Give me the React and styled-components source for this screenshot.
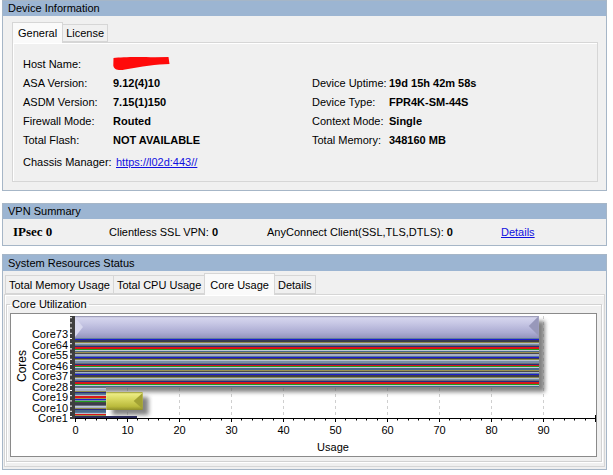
import React from "react";
import styled, { createGlobalStyle } from "styled-components";

const GlobalStyle = createGlobalStyle`
  html, body { margin: 0; padding: 0; background: #ffffff; }
  body { font-family: "Liberation Sans", Arial, sans-serif; font-size: 11px; color: #000; }
  * { box-sizing: border-box; }
`;

const Page = styled.div`
  width: 613px;
  height: 475px;
  padding: 0 6px 0 2px;
  display: flex;
  flex-direction: column;
  overflow: hidden;
`;

const Panel = styled.section`
  border: 1px solid #a6b6c7;
  background: #f0f0f0;
  margin-top: ${(p) => p.$gap || 0}px;
`;

const PanelHeader = styled.div`
  height: ${(p) => p.$h || 15}px;
  line-height: ${(p) => p.$h || 15}px;
  background: #9cb5d2;
  padding-left: 5px;
  font-size: 11px;
  white-space: nowrap;
`;

const PanelBody = styled.div`
  padding: ${(p) => p.$pad};
`;

const TabStrip = styled.div`
  display: flex;
  align-items: flex-end;
  height: ${(p) => p.$h}px;
  padding-left: ${(p) => p.$indent || 0}px;
`;

const Tab = styled.div`
  position: relative;
  z-index: ${(p) => (p.$selected ? 2 : 1)};
  height: ${(p) => (p.$selected ? p.$h + 1 : p.$h - 2)}px;
  margin-bottom: ${(p) => (p.$selected ? -1 : 0)}px;
  margin-left: ${(p) => (p.$first ? 0 : -1)}px;
  padding: 0 ${(p) => (p.$selected ? 5 : 3)}px;
  display: flex;
  align-items: center;
  border: 1px solid #d6d6d6;
  border-bottom: ${(p) => (p.$selected ? "none" : "1px solid #d6d6d6")};
  background: ${(p) => (p.$selected ? "#fafafa" : "#f0f0f0")};
  white-space: nowrap;
`;

const TabContent = styled.div`
  border: 1px solid #d6d6d6;
  background: #f0f0f0;
  box-shadow: inset 1px 1px 0 #ffffff;
  padding: ${(p) => p.$pad || 0};
`;

const InfoGrid = styled.div`
  display: grid;
  grid-template-columns: 90px 199px 77px 1fr;
  grid-auto-rows: 19px;
  align-items: center;
  padding: 0 10px;
`;

const Label = styled.span`
  white-space: nowrap;
`;

const Value = styled.span`
  font-weight: bold;
  white-space: nowrap;
`;

const RedactionCell = styled.div`
  display: flex;
  align-items: center;
  height: 19px;
`;

const ChassisRow = styled.div`
  display: grid;
  grid-template-columns: 93px 1fr;
  align-items: center;
  height: 19px;
  margin-top: 3px;
  padding: 0 10px;
`;

const Link = styled.a`
  color: #1010e0;
  text-decoration: underline;
  cursor: pointer;
  white-space: nowrap;
`;

const VpnRow = styled.div`
  display: flex;
  align-items: center;
  height: 26px;
  padding-left: 10px;
`;

const VpnCell = styled.div`
  width: ${(p) => p.$w}px;
  flex: none;
  white-space: nowrap;
`;

const IpsecText = styled.span`
  font-family: "Liberation Serif", "Times New Roman", serif;
  font-weight: bold;
  font-size: 13px;
`;

const Group = styled.fieldset`
  margin: 3px 2px 4px 1px;
  padding: 2px 4px 4px 3px;
  border: 1px solid #d2d2d2;
  box-shadow: 1px 1px 0 #ffffff, inset 1px 1px 0 #ffffff;
  min-width: 0;
`;

const Legend = styled.legend`
  padding: 0 2px;
  line-height: 13px;
  font-size: 11px;
`;

const ChartFrame = styled.div`
  height: 144px;
  border: 1px solid #8a8a8a;
  background: #ffffff;
  overflow: hidden;
`;

const Redaction = () => (
  <svg width="57" height="15" viewBox="0 0 57 15" style={{ display: "block", flex: "none" }}>
    <path
      d="M0.5 2 C10 0.6 28 0.8 42 1.2 L55.5 1 L56.5 8 C44 8.2 28 10.5 12 13.6 C5 15 0.8 13.4 0.3 9.5 Z"
      fill="#ff0a0a"
    />
  </svg>
);

const PAL = [
  "#1f9f1f", "#d81818", "#2a2a7a", "#687078", "#7890a8", "#b4bece",
  "#8c8a4a", "#3c3c4c", "#1c1cd0", "#5a7a9a", "#a8b0c8", "#484848",
  "#9a9050", "#4a6a8a", "#c0c8d8",
];

const X0 = 64;
const UNIT = 5.2;
const AY = 104;
const STEP = 7 / 6;
const cy = (n) => AY - (n - 1) * STEP;
const vx = (v) => X0 + v * UNIT;
const FONT = "Liberation Sans, Arial, sans-serif";

function CoreChart() {
  const high = [];
  for (let n = 28; n <= 69; n++) {
    high.push(
      <rect key={"h" + n} x={X0} y={cy(n) - STEP / 2} width={vx(89.2) - X0} height={STEP + 0.05} fill={PAL[n % PAL.length]} />
    );
  }
  const low = [];
  for (let n = 1; n <= 27; n++) {
    low.push(
      <rect key={"l" + n} x={X0} y={cy(n) - STEP / 2} width={vx(6) - X0} height={STEP + 0.05} fill={PAL[(n * 4) % PAL.length]} />
    );
  }
  const grid = [];
  for (let k = 1; k <= 9; k++) {
    grid.push(
      <line key={"g" + k} x1={vx(10 * k) + 0.5} x2={vx(10 * k) + 0.5} y1={2} y2={AY} stroke="#cfcfcf" strokeDasharray="3 3" />
    );
  }
  const ticks = [];
  for (let v = 0; v <= 100; v += 2) {
    const major = v % 10 === 0;
    ticks.push(
      <line key={"t" + v} x1={Math.round(vx(v)) + 0.5} x2={Math.round(vx(v)) + 0.5} y1={AY} y2={AY + (major ? 4 : 2.5)} stroke="#000" />
    );
  }
  const tickLabels = [];
  for (let k = 0; k <= 9; k++) {
    tickLabels.push(
      <text key={"x" + k} x={vx(10 * k) + 0.5} y={120} textAnchor="middle" fontSize="11" fontFamily={FONT}>
        {10 * k}
      </text>
    );
  }
  const yNotches = [];
  for (let i = 0; i < 20; i++) {
    yNotches.push(<rect key={"n" + i} x={59} y={AY - 2 - i * 5.2} width={2} height={1} fill="#ffffff" />);
  }
  const yLabels = [73, 64, 55, 46, 37, 28, 19, 10, 1];

  return (
    <svg width="585" height="142" viewBox="0 0 585 142" style={{ display: "block" }}>
      <defs>
        <linearGradient id="lav" x1="0" y1="0" x2="0" y2="1">
          <stop offset="0" stopColor="#8a8aa6" />
          <stop offset="0.08" stopColor="#d6d6ee" />
          <stop offset="0.35" stopColor="#c6c6e4" />
          <stop offset="0.75" stopColor="#ababd2" />
          <stop offset="1" stopColor="#9494bc" />
        </linearGradient>
        <linearGradient id="yel" x1="0" y1="0" x2="0" y2="1">
          <stop offset="0" stopColor="#96962e" />
          <stop offset="0.1" stopColor="#ecec84" />
          <stop offset="0.4" stopColor="#d8d860" />
          <stop offset="0.8" stopColor="#baba3c" />
          <stop offset="1" stopColor="#8e8e2a" />
        </linearGradient>
        <filter id="soft" x="-10%" y="-20%" width="120%" height="140%">
          <feGaussianBlur stdDeviation="2" />
        </filter>
      </defs>

      {grid}

      <rect x={X0 + 8} y={7} width={vx(89.2) - X0 - 2} height={71} fill="#5a5a5a" opacity="0.75" filter="url(#soft)" />
      <rect x={vx(6) + 6} y={83} width={vx(13) - vx(6)} height={18} fill="#5a5a5a" opacity="0.75" filter="url(#soft)" />

      <g shapeRendering="crispEdges">
        {high}
        {low}
        <rect x={X0} y={cy(1) - 1.6} width={vx(12) - X0} height={1.6} fill="#2a2a5a" />
      </g>

      <rect x={X0} y={2} width={vx(89.2) - X0} height={22.1} fill="url(#lav)" />
      <polygon points={`${X0},3 ${X0 + 8},13 ${X0},23`} fill="#d8d8ee" />
      <polygon points={`${vx(89.2)},2 ${vx(89.2) - 10},12 ${vx(89.2)},22`} fill="#9898ba" />

      <rect x={vx(6)} y={78} width={vx(13) - vx(6)} height={18} fill="url(#yel)" />
      <polygon points={`${vx(13)},79 ${vx(13) - 9},87 ${vx(13)},95`} fill="#a2a234" />

      <rect x={59} y={2} width={5} height={AY - 1} fill="#3e3e3e" />
      {yNotches}

      <line x1={X0} x2={584} y1={AY + 0.5} y2={AY + 0.5} stroke="#000" />
      {ticks}
      <line x1={584.5} x2={584.5} y1={AY - 3} y2={AY + 4} stroke="#000" />
      {tickLabels}

      {yLabels.map((n) => (
        <text key={"y" + n} x={57} y={cy(n) + 4} textAnchor="end" fontSize="11" fontFamily={FONT}>
          {"Core" + n}
        </text>
      ))}

      <text x={322} y={137} textAnchor="middle" fontSize="11" fontFamily={FONT}>
        Usage
      </text>
      <text x={15} y={52} textAnchor="middle" fontSize="12" fontFamily={FONT} transform="rotate(-90 15 52)">
        Cores
      </text>
    </svg>
  );
}

export default function App() {
  return (
    <>
      <GlobalStyle />
      <Page>
        <Panel>
          <PanelHeader>Device Information</PanelHeader>
          <PanelBody $pad="6px 8px 8px 9px">
            <TabStrip $h={20}>
              <Tab $selected $first $h={20}>General</Tab>
              <Tab $h={20}>License</Tab>
            </TabStrip>
            <TabContent $pad="11px 0 10px">
              <InfoGrid>
                <Label>Host Name:</Label>
                <RedactionCell><Redaction /></RedactionCell>
                <span />
                <span />

                <Label>ASA Version:</Label>
                <Value>9.12(4)10</Value>
                <Label>Device Uptime:</Label>
                <Value>19d 15h 42m 58s</Value>

                <Label>ASDM Version:</Label>
                <Value>7.15(1)150</Value>
                <Label>Device Type:</Label>
                <Value>FPR4K-SM-44S</Value>

                <Label>Firewall Mode:</Label>
                <Value>Routed</Value>
                <Label>Context Mode:</Label>
                <Value>Single</Value>

                <Label>Total Flash:</Label>
                <Value>NOT AVAILABLE</Value>
                <Label>Total Memory:</Label>
                <Value>348160 MB</Value>
              </InfoGrid>
              <ChassisRow>
                <Label>Chassis Manager:</Label>
                <Link>https://l02d:443//</Link>
              </ChassisRow>
            </TabContent>
          </PanelBody>
        </Panel>

        <Panel $gap={12}>
          <PanelHeader>VPN Summary</PanelHeader>
          <VpnRow>
            <VpnCell $w={96}>
              <IpsecText>IPsec 0</IpsecText>
            </VpnCell>
            <VpnCell $w={158}>
              Clientless SSL VPN: <Value>0</Value>
            </VpnCell>
            <VpnCell $w={234}>
              AnyConnect Client(SSL,TLS,DTLS): <Value>0</Value>
            </VpnCell>
            <VpnCell $w={60}>
              <Link>Details</Link>
            </VpnCell>
          </VpnRow>
        </Panel>

        <Panel $gap={8}>
          <PanelHeader $h={16}>System Resources Status</PanelHeader>
          <PanelBody $pad="2px 1px 2px 1px">
            <TabStrip $h={21} $indent={1}>
              <Tab $first $h={21}>Total Memory Usage</Tab>
              <Tab $h={21}>Total CPU Usage</Tab>
              <Tab $selected $h={21}>Core Usage</Tab>
              <Tab $h={21}>Details</Tab>
            </TabStrip>
            <TabContent>
              <Group>
                <Legend>Core Utilization</Legend>
                <ChartFrame>
                  <CoreChart />
                </ChartFrame>
              </Group>
            </TabContent>
          </PanelBody>
        </Panel>
      </Page>
    </>
  );
}
